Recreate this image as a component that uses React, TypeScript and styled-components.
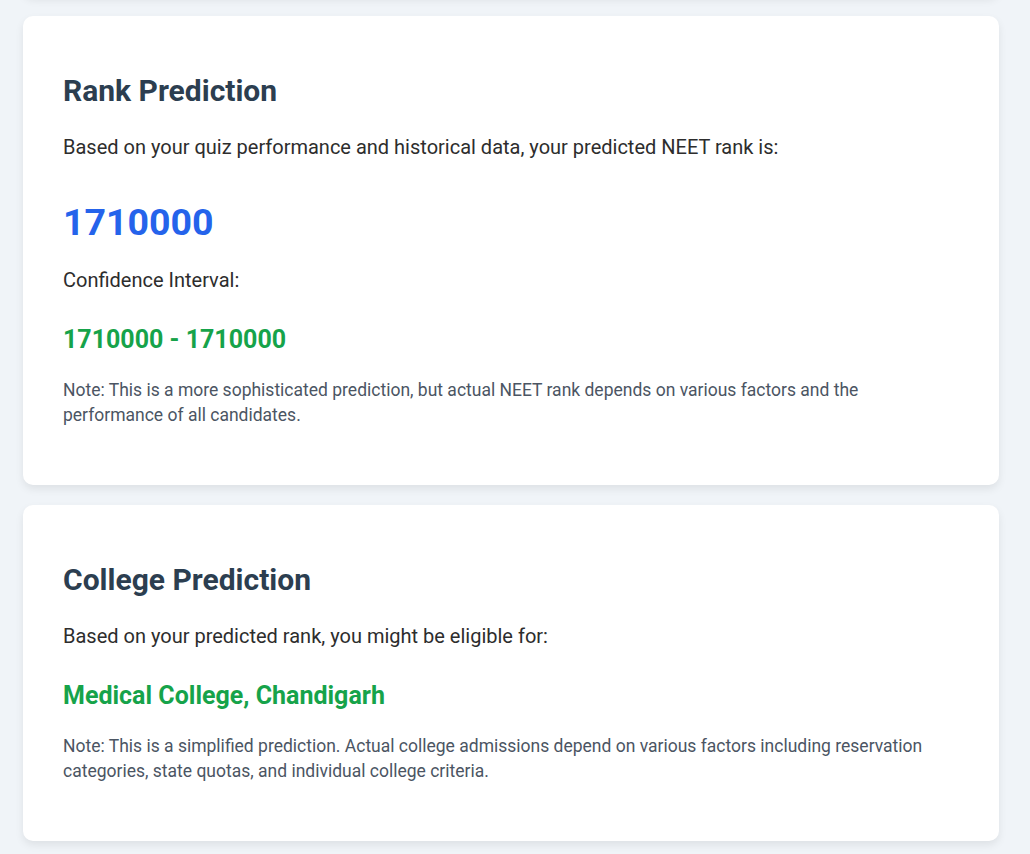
import { FC } from 'react';
import styled, { createGlobalStyle } from 'styled-components';

const GlobalStyle = createGlobalStyle`
  html, body {
    margin: 0;
    padding: 0;
    background: #f0f4f8;
    font-family: Roboto, "Liberation Sans", Arial, sans-serif;
  }
`;

// the page is scrolled, so the card above only shows its bottom edge
const Page = styled.div`
  display: flex;
  flex-direction: column;
  gap: 20px;
  width: 976px;
  padding: 0 31px 40px 23px;
  margin-top: -104px;
`;

const Card = styled.section<{ stub?: boolean }>`
  background: #ffffff;
  border-radius: 10px;
  box-shadow: 0 4px 8px rgba(0, 0, 0, 0.08);
  padding: 40px;
  min-height: ${({ stub }) => (stub ? '20px' : 'auto')};
`;

const Title = styled.h2`
  margin: 17px 0 0;
  font-size: 30px;
  font-weight: 700;
  line-height: 36px;
  color: #2c3e50;
`;

const Body = styled.p<{ gap?: number }>`
  margin: ${({ gap }) => gap ?? 22}px 0 0;
  font-size: 20px;
  line-height: 32px;
  color: #2d2d2d;
`;

const BigNumber = styled.div`
  margin: 37px 0 0;
  font-size: 37.5px;
  font-weight: 700;
  line-height: 45px;
  color: #2563eb;
`;

const Highlight = styled.div`
  margin: 28px 0 0;
  font-size: 25px;
  font-weight: 700;
  line-height: 32px;
  color: #16a34a;
`;

const Note = styled.p`
  margin: 22px 0 17px;
  font-size: 17.5px;
  line-height: 25px;
  color: #4b5563;
`;

const RankCard: FC = () => (
  <Card>
    <Title>Rank Prediction</Title>
    <Body>Based on your quiz performance and historical data, your predicted NEET rank is:</Body>
    <BigNumber>1710000</BigNumber>
    <Body gap={19}>Confidence Interval:</Body>
    <Highlight>1710000 - 1710000</Highlight>
    <Note>
      Note: This is a more sophisticated prediction, but actual NEET rank depends on various factors and the
      performance of all candidates.
    </Note>
  </Card>
);

const CollegeCard: FC = () => (
  <Card>
    <Title>College Prediction</Title>
    <Body>Based on your predicted rank, you might be eligible for:</Body>
    <Highlight>Medical College, Chandigarh</Highlight>
    <Note>
      Note: This is a simplified prediction. Actual college admissions depend on various factors including
      reservation categories, state quotas, and individual college criteria.
    </Note>
  </Card>
);

const App: FC = () => (
  <>
    <GlobalStyle />
    <Page>
      <Card stub />
      <RankCard />
      <CollegeCard />
    </Page>
  </>
);

export default App;
